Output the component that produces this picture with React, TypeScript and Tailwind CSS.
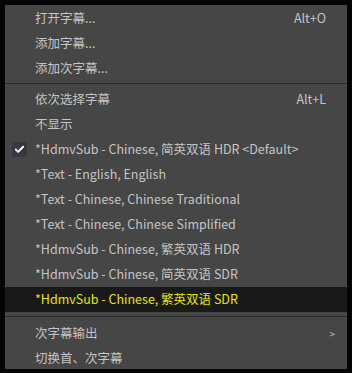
import { Check } from "lucide-react";

type Item = {
  label: string;
  shortcut?: string;
  checked?: boolean;
  active?: boolean;
  arrow?: boolean;
};

const groups: Item[][] = [
  [
    { label: "打开字幕...", shortcut: "Alt+O" },
    { label: "添加字幕..." },
    { label: "添加次字幕..." },
  ],
  [
    { label: "依次选择字幕", shortcut: "Alt+L" },
    { label: "不显示" },
    { label: "*HdmvSub - Chinese, 简英双语 HDR <Default>", checked: true },
    { label: "*Text - English, English" },
    { label: "*Text - Chinese, Chinese Traditional" },
    { label: "*Text - Chinese, Chinese Simplified" },
    { label: "*HdmvSub - Chinese, 繁英双语 HDR" },
    { label: "*HdmvSub - Chinese, 简英双语 SDR" },
    { label: "*HdmvSub - Chinese, 繁英双语 SDR", active: true },
  ],
  [
    { label: "次字幕输出", arrow: true },
    { label: "切换首、次字幕" },
  ],
];

const Row = ({ item }: { item: Item }) => (
  <div
    className={
      "relative flex items-center h-[25px] pl-[30px] pr-[21px] " +
      (item.active ? "bg-[#191919] text-[#e8e400]" : "text-[#c4c4c4]")
    }
  >
    {item.checked && (
      <span className="absolute left-[7px] top-[5px] flex items-center justify-center w-[15px] h-[15px] rounded-[2px] bg-[#383842]">
        <Check className="w-[11px] h-[11px] text-white" strokeWidth={4} />
      </span>
    )}
    <span className="flex-1 whitespace-pre">{item.label}</span>
    {item.shortcut && <span>{item.shortcut}</span>}
    {item.arrow && <span className="text-[10px] mr-[-9px]">&gt;</span>}
  </div>
);

export default function App() {
  return (
    <div
      className="w-[352px] h-[373px] bg-[#050505] pt-[5px] pl-[5px] text-[12.5px] leading-none"
      style={{ fontFamily: '"Microsoft YaHei", "Noto Sans CJK SC", sans-serif' }}
    >
      <div className="w-[342px] h-[364px] bg-[#464646] pt-[1px]">
        {groups.map((g, i) => (
          <div key={i}>
            {i > 0 && (
              <div className={i === 1 ? "pt-[2px] pb-[3px]" : "py-[4px]"}>
                <div className="h-[1px] bg-[#2c2c2c]" />
              </div>
            )}
            {g.map((item) => (
              <Row key={item.label} item={item} />
            ))}
          </div>
        ))}
      </div>
    </div>
  );
}
